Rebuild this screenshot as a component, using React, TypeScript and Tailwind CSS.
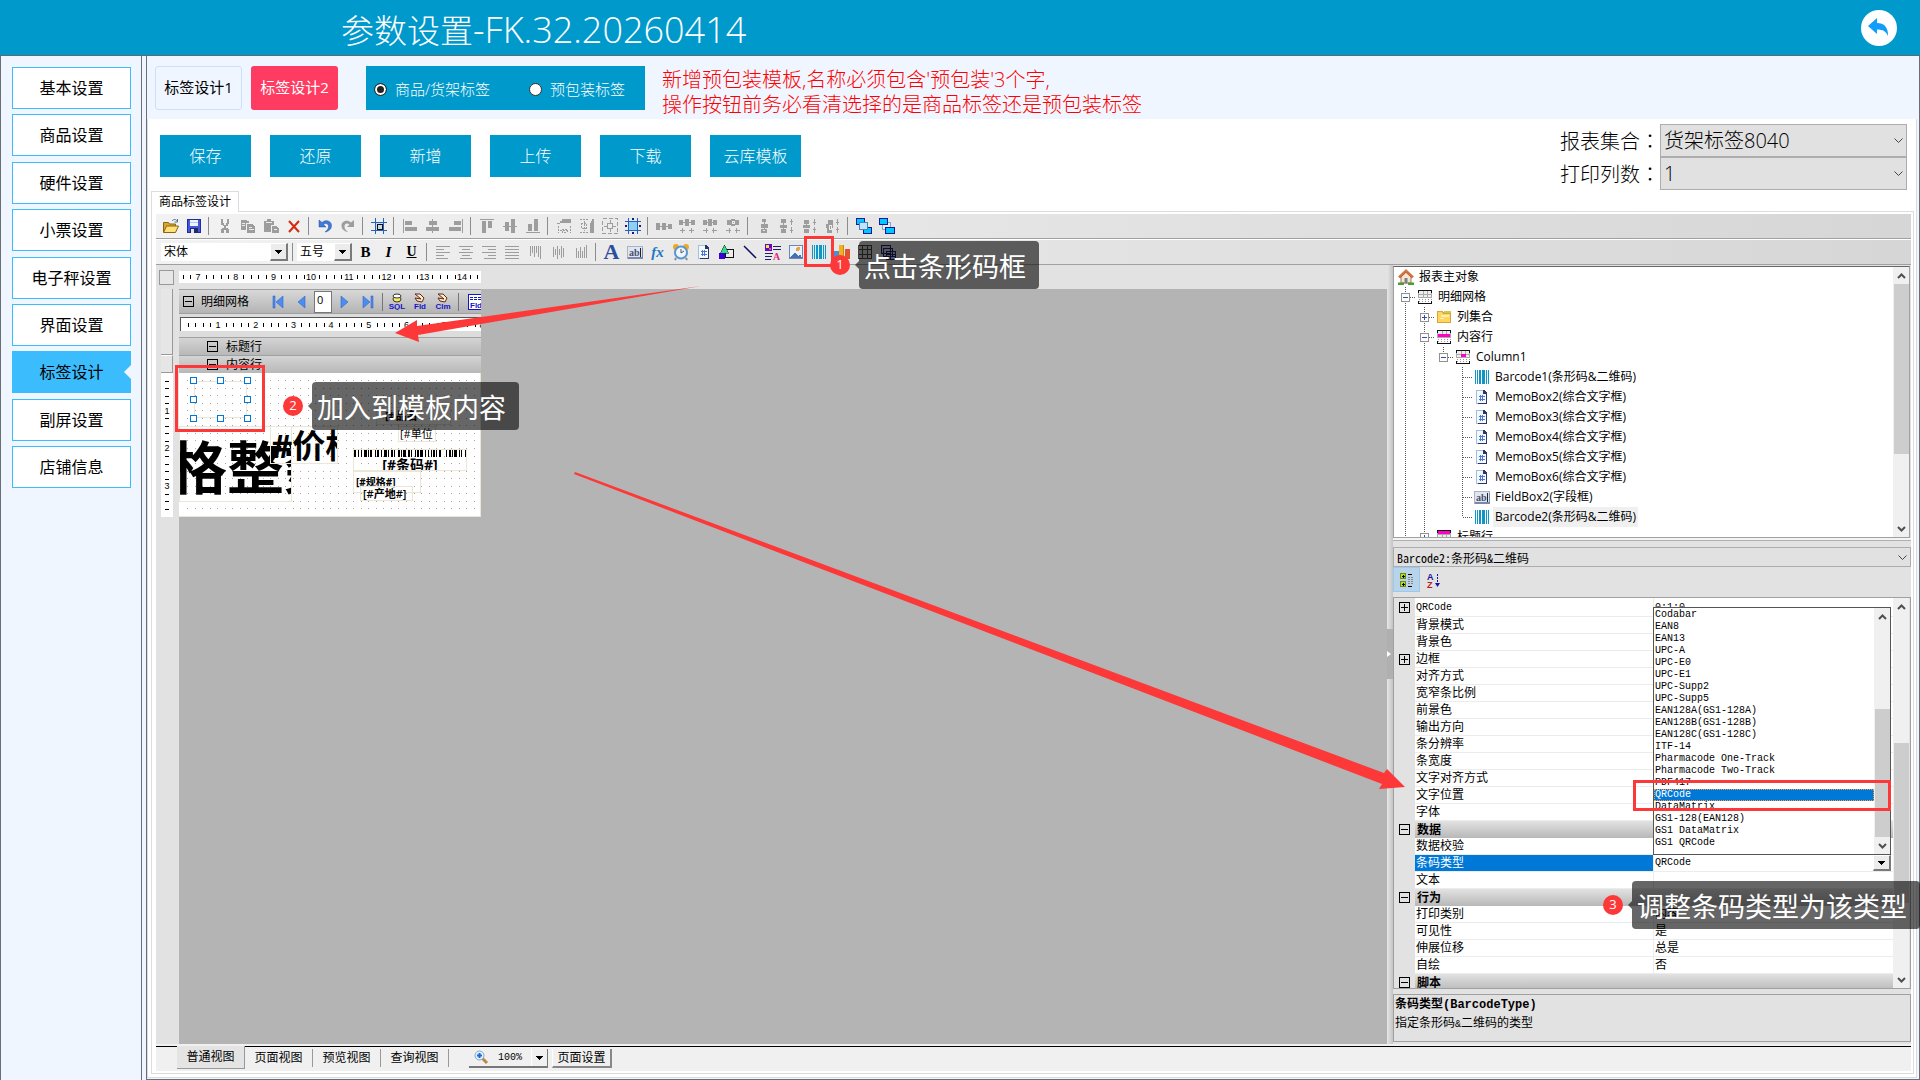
import type { ReactNode } from 'react';

const NAV = ['基本设置', '商品设置', '硬件设置', '小票设置', '电子秤设置', '界面设置', '标签设计', '副屏设置', '店铺信息'];
const ACTIONS = ['保存', '还原', '新增', '上传', '下载', '云库模板'];

const G = '#9d9d9d';

function Svg({ children, w = 16, h = 16 }: { children: ReactNode; w?: number; h?: number }) {
  return (
    <svg width={w} height={h} viewBox={`0 0 ${w} ${h}`} className="shrink-0" shapeRendering="crispEdges">
      {children}
    </svg>
  );
}

function P({ d, c = G }: { d: string; c?: string }) {
  return <path d={d} fill={c} />;
}

function L({ d, c = G, w = 1 }: { d: string; c?: string; w?: number }) {
  return <path d={d} fill="none" stroke={c} strokeWidth={w} />;
}

const BarcodeIcon = () => (
  <Svg><P c="#0d96c8" d="M1 1h1v14H1zM3 1h1v14H3zM5 1h2v14H5zM8 1h3v14H8zM12 1h1v14h-1zM14 1h1v14h-1z" /></Svg>
);

const MemoIcon = () => (
  <Svg>
    <path d="M2.500 1.500h7l3 3v10h-10z" fill="#f4f8ff" stroke="#9fc0e4" />
    <P c="#2f3566" d="M12 5h1v10H4v-1h8zM9 1h1l3 3v1H9z" />
    <L c="#4a78d0" d="M5 7.500h6M5 10.500h6M6.500 6v6M8.500 6v6" />
  </Svg>
);

const FieldIcon = () => (
  <Svg>
    <rect x="0.500" y="2.500" width="15" height="12" fill="#dfe6f2" stroke="#a9b3c8" />
    <P c="#7c88aa" d="M1 13h15v2H1zM15 4h1v11h-1z" />
    <text x="2" y="12" fontSize="10" fontWeight="bold" fill="#46506e" fontFamily="Liberation Serif, serif">ab</text>
    <P c="#222" d="M13 4h1v9h-1z" />
  </Svg>
);

function GridIcon({ mark }: { mark?: string }) {
  return (
    <Svg>
      <rect x="1.500" y="1.500" width="13" height="7" fill="#eee" stroke="#aaa" />
      <L c="#111" d="M1 1.500h14M1.500 1v3M14.500 1v3" />
      <L c="#aaa" d="M2 5.500h12M6 2v6M10.500 2v6" />
      {mark === 'row' && <P c="#ff00c8" d="M2 5h12v3H2z" />}
      {mark === 'cell' && <P c="#ff00c8" d="M6 5h5v3H6z" />}
      {mark === 'title' && <P c="#ff00c8" d="M2 2h12v3H2z" />}
      <path d="M2 10.500h13M2 12.500h13" stroke="#999" strokeDasharray="1 2" />
      <L c="#111" d="M1.500 12v2.500h13V12" />
    </Svg>
  );
}

const HouseIcon = () => (
  <svg width="16" height="16" viewBox="0 0 16 16">
    <path d="M3 8v6h10V8L8 3z" fill="#f3e7d2" stroke="#a5764a" />
    <path d="M8 0.500 0.500 7.500 2 9l6-5.500L14 9l1.500-1.500z" fill="#d9743a" stroke="#a84e1e" strokeWidth="0.500" />
    <path d="M6.500 9h3v5.500h-3z" fill="#7d7f8a" />
    <path d="M0 13.500h6V16H0zM10 13.500h6V16h-6z" fill="#4c9a3a" />
  </svg>
);

const TreeFolder = () => (
  <Svg>
    <path d="M1.500 2.500h5l1 2h7v9h-13z" fill="#ffd65c" stroke="#dba43a" />
    <P c="#fff0b8" d="M5 6h8v2H5zM4 9h4v1H4z" />
    <P c="#c8cc4a" d="M8 2h7v2H8z" />
  </Svg>
);

const OpenIcon = () => (
  <svg width="16" height="16" viewBox="0 0 16 16">
    <path d="M0.500 14V4.500h5l1 1.500h6v8z" fill="#d9a62e" stroke="#8a6410" />
    <path d="M0.500 14.500 3.500 8h12l-3 6.500z" fill="#ffe07a" stroke="#8a6410" />
    <path d="M9 3c1.500-2 4-2 5 0M14.500 1v3h-3" fill="none" stroke="#51709c" />
  </svg>
);

const SaveIcon = () => (
  <Svg>
    <path d="M1.500 1.500h13v13h-13z" fill="#4557d8" stroke="#1f2f9a" />
    <P c="#eef3ff" d="M4 2h8v6H4z" />
    <P c="#b9c6ef" d="M4 4h8v1H4z" />
    <P c="#23276b" d="M4 10h8v5H4z" />
    <P c="#dfe4f5" d="M5 11h3v4H5z" />
  </Svg>
);

const ROW1: (ReactNode | '|')[] = [
  <OpenIcon />,
  <SaveIcon />,
  '|',
  <Svg><P d="M4 1h2v4h1v2h2V5h1V1h2v5h-1v2H9v2h2v1h1v4H9v-3H7v3H4v-4h1v-1h2V8H6V7H4z" /></Svg>,
  <Svg><P d="M1 2h6v1h2v2H6v7H1zM7 6h5l3 3v6H7z" /><L c="#ececec" d="M9 9.500h3M9 11.500h5M2 5.500h3M2 7.500h3" /></Svg>,
  <Svg><P d="M1 3h3V1h4v2h3v4H8v7H1zM9 8h4l3 3v4H9z" /><L c="#ececec" d="M3 4.500h6M11 11.500h3" /></Svg>,
  <svg width="16" height="16" viewBox="0 0 16 16"><path d="M3 3l10 11M13 3 3 14" stroke="#d42a12" strokeWidth="2" /></svg>,
  '|',
  <svg width="16" height="16" viewBox="0 0 16 16"><path d="M2 2v7h7L6.500 6.500C9 4.500 12 6 11.500 9c-.3 2-1.500 3.500-3.500 5 4-.8 6.500-3 6.500-6.500C14.500 3 8.500 1 5 4.500z" fill="#3f7ad8" stroke="#24509c" strokeWidth="0.500" /></svg>,
  <svg width="16" height="16" viewBox="0 0 16 16"><path d="M14 2v7H7l2.500-2.500C7 4.500 4 6 4.500 9c.3 2 1.500 3.500 3.500 5-4-.8-6.500-3-6.500-6.500C1.500 3 7.500 1 11 4.500z" fill={G} /></svg>,
  '|',
  <Svg><P c="#c9daf0" d="M5 5h7v7H5z" /><L c="#2563b8" d="M0 4.500h16M0 12.500h16M4.500 0v16M12.500 0v16" /><L c="#111" d="M6 6.500h5v5h-5z" /></Svg>,
  '|',
  <Svg><P d="M1 1h1v14H1zM3 3h7v4H3zM3 9h12v4H3z" /></Svg>,
  <Svg><P d="M7 1h1v14H7zM4 3h8v4H4zM1 9h13v4H1z" /></Svg>,
  <Svg><P d="M14 1h1v14h-1zM6 3h7v4H6zM1 9h12v4H1z" /></Svg>,
  '|',
  <Svg><P d="M1 1h14v1H1zM3 3h4v12H3zM9 3h4v7H9z" /></Svg>,
  <Svg><P d="M1 8h14v1H1zM3 4h4v9H3zM9 1h4v14H9z" /></Svg>,
  <Svg><P d="M1 14h14v1H1zM3 6h4v7H3zM9 1h4v12H9z" /></Svg>,
  '|',
  <Svg><P d="M6 1h9v4H4V3h2zM1 5h3v1H1z" /><path d="M2 8v7M14 8v7M6 11h5v3H6zM4 12.500h8" stroke={G} fill="none" strokeDasharray="2 1" /></Svg>,
  <Svg><P d="M11 5h1V3h1V1h2v14h-4z" /><path d="M1 1.500h8M1 14.500h8M5 3v10M2 5h5v5H2z" stroke={G} fill="none" strokeDasharray="2 1" /></Svg>,
  <Svg><path d="M.5.5h15v15H.5z" stroke={G} fill="none" strokeDasharray="4 2" /><L d="M5.500 5.500h5v5h-5zM8 2v3M8 11v3M2 8h3M11 8h3" /></Svg>,
  <Svg><P c="#8fd0f5" d="M4 4h8v8H4z" /><L c="#2563b8" d="M0 3.500h16M0 12.500h16M3.500 0v16M12.500 0v16" /><P c="#101a80" d="M7 0h2v2H7zM7 14h2v2H7zM0 7h2v2H0zM14 7h2v2h-2z" /></Svg>,
  '|',
  <Svg><P d="M0 5h4v7H0zM4 8h2v1H4zM6 5h4v7H6zM10 8h2v1h-2zM12 6h4v5h-4z" /></Svg>,
  <Svg><P d="M0 2h4v5H0zM4 4h2v1H4zM6 1h4v7H6zM10 4h2v1h-2zM12 2h4v5h-4zM1 12h5v1H1zM3 10h1v5H3zM10 12h5v1h-5zM12 10h1v5h-1z" /></Svg>,
  <Svg><P d="M1 2h4v5H1zM5 4h1v1H5zM6 1h4v7H6zM10 4h1v1h-1zM11 2h4v5h-4zM1 12h5v1H1zM4 10h1v5H4zM10 12h5v1h-5zM11 10h1v5h-1z" /></Svg>,
  <Svg><P d="M2 2h4v5H2zM6 1h4v7H6zM10 2h4v5h-4zM1 12h5v1H1zM4 10h1v5H4zM10 12h5v1h-5zM11 10h1v5h-1z" /><L c="#ececec" d="M7 3.500h2v2h-2z" /></Svg>,
  '|',
  <Svg><P d="M6 1h4v3H6zM8 4h1v2H8zM5 6h7v4H5zM8 10h1v1H8zM5 11h6v4H5z" /><L c="#ececec" d="M7 12.500h2" /></Svg>,
  <Svg><P d="M2 1h5v4H2zM4 5h1v2H4zM1 7h7v3H1zM4 10h1v1H4zM2 11h5v4H2zM12 1h1v6h-1zM11 3h3v1h-3zM12 9h1v6h-1zM11 12h3v1h-3z" /></Svg>,
  <Svg><P d="M2 2h5v4H2zM4 6h1v1H4zM1 7h7v3H1zM2 11h5v4H2zM12 1h1v6h-1zM11 4h3v1h-3zM12 9h1v6h-1zM11 11h3v1h-3z" /></Svg>,
  <Svg><P d="M3 2h5v4H3zM1 6h7v4H1zM2 10h5v5H2zM12 1h1v6h-1zM11 4h3v1h-3zM12 9h1v6h-1zM11 11h3v1h-3z" /><L c="#ececec" d="M4 7.500h2v4h-2z" /></Svg>,
  '|',
  <Svg><path d="M.5.5h8v6h-8zM7.500 9.500h8v6h-8z" fill="#00c8ff" stroke="#1a1a90" /><path d="M3.500 4.500h8v7h-8z" fill="#bfe4fb" stroke="#3f86d0" /></Svg>,
  <Svg><path d="M3.500 4.500h8v7h-8z" fill="#e4f1fb" stroke="#7aa8d8" /><path d="M.5.5h8v6h-8zM6.500 9.500h9v6h-9z" fill="#00c8ff" stroke="#1a1a90" /></Svg>,
];

const ROW2: (ReactNode | '|')[] = [
  <b className="font-['Liberation_Serif',serif] text-[15px] leading-4">B</b>,
  <b className="font-['Liberation_Serif',serif] text-[15px] leading-4 italic">I</b>,
  <b className="font-['Liberation_Serif',serif] text-[14px] leading-4 underline">U</b>,
  '|',
  <Svg><L d="M1 2.500h14M1 5.500h8M1 8.500h14M1 11.500h8M1 14.500h12" /></Svg>,
  <Svg><L d="M1 2.500h14M4 5.500h8M1 8.500h14M4 11.500h8M2 14.500h12" /></Svg>,
  <Svg><L d="M1 2.500h14M7 5.500h8M1 8.500h14M7 11.500h8M3 14.500h12" /></Svg>,
  <Svg><L d="M1 2.500h14M1 5.500h14M1 8.500h14M1 11.500h14M1 14.500h14" /></Svg>,
  <Svg><L d="M3.500 2v10M5.500 2v7M7.500 2v11M9.500 2v7M11.500 2v11M13.500 2v13" /></Svg>,
  <Svg><L d="M3.500 3v10M5.500 5v6M7.500 2v13M9.500 5v6M11.500 2v12M13.500 4v9" /></Svg>,
  <Svg><L d="M3.500 4v10M5.500 7v7M7.500 3v11M9.500 7v7M11.500 3v11M13.500 1v13" /></Svg>,
  '|',
  <b className="font-['Liberation_Serif',serif] text-[22px] leading-4 text-[#2a4f9c]">A</b>,
  <FieldIcon />,
  <i className="font-['Liberation_Serif',serif] text-[15px] font-bold leading-4 text-[#2277c8]">fx</i>,
  <svg width="18" height="18" viewBox="0 0 18 18">
    <circle cx="4" cy="4" r="3" fill="#f0a91e" /><circle cx="14" cy="4" r="3" fill="#f0a91e" />
    <path d="M4 15l-1 2M14 15l1 2" stroke="#8a8a8a" strokeWidth="2" />
    <circle cx="9" cy="9.500" r="6" fill="#eef7ff" stroke="#5b95cf" strokeWidth="2" />
    <path d="M9 6v4l3-2" fill="none" stroke="#555" />
  </svg>,
  <MemoIcon />,
  <Svg><path d="M6.500 5.500h8v8h-8z" fill="#ededed" stroke="#111" /><path d="M6 1v8H2v-1z" fill="#28e08c" /><path d="M5.500 1 9.500 9h-8z" fill="#28e08c" stroke="#111" strokeWidth="0.500" /><P c="#3a00d8" d="M0 9h6v6H0z" /></Svg>,
  <svg width="16" height="16" viewBox="0 0 16 16"><path d="M2 2l12 12" stroke="#101060" strokeWidth="1.500" /></svg>,
  <Svg><P c="#5a0fb8" d="M0 0h7v7H0z" /><P c="#ffe14a" d="M1 1h3v3H1z" /><P c="#ff40a0" d="M4 4h2v2H4z" /><L c="#20206a" d="M8 2.500h8M8 5.500h8M0 9.500h8M0 12.500h7M0 15.500h6" /><text x="8" y="16" fontSize="10" fontWeight="bold" fill="#e0287c" fontFamily="Liberation Serif, serif">A</text></Svg>,
  <Svg><rect x="1.500" y="1.500" width="13" height="13" fill="#e8f3ff" stroke="#6f86b5" /><circle cx="10" cy="5" r="2" fill="#f2a23a" /><path d="M2 14l5-6 3 4 2-2 2 4z" fill="#4a6fb0" /></Svg>,
  <BarcodeIcon />,
  <Svg><P c="#4a8fd0" d="M0 7h5v8H0z" /><P c="#f0b020" d="M5 1h5v14H5z" /><P c="#c98a10" d="M9 1h1v14H9z" /><P c="#e0512c" d="M11 5h5v10h-5z" /></Svg>,
  <Svg><rect x="1.500" y="1.500" width="13" height="13" fill="#ddd" stroke="#444" /><L c="#444" d="M1 5.500h14M1 10.500h14M5.500 1v14M10.500 1v14" /></Svg>,
  <Svg><path d="M1.500 1.500h9v8h-9zM3.500 4.500h9v8h-9zM6.500 7.500h9v8h-9z" fill="#cfd8ee" stroke="#22226a" /><L c="#22226a" d="M7 10.500h8M7 12.500h8M10 8v7" /></Svg>,
];

function ToolItems({ items }: { items: (ReactNode | '|')[] }) {
  return (
    <>
      {items.map((it, i) =>
        it === '|' ? (
          <span key={i} className="ml-[3px] mr-[4px] h-[18px] w-px shrink-0 bg-[#8c8c8c]" />
        ) : (
          <button key={i} type="button" className="flex h-[22px] w-[23px] shrink-0 items-center justify-center">
            {it}
          </button>
        ),
      )}
    </>
  );
}

function DropButton() {
  return (
    <span className="pointer-events-none absolute right-0 top-0 flex h-full w-[18px] items-center justify-center border-b-2 border-r-2 border-t border-l border-b-[#7a7a7a] border-r-[#7a7a7a] border-l-white border-t-white bg-[#ececec]">
      <Svg w={7} h={4}><P c="#000" d="M0 0h7v1H0zM1 1h5v1H1zM2 2h3v1H2zM3 3h1v1H3z" /></Svg>
    </span>
  );
}

function Chevron({ up = false }: { up?: boolean }) {
  return (
    <svg width="9" height="6" viewBox="0 0 9 6">
      <path d={up ? 'M1 5l3.500-3.500L8 5' : 'M1 1l3.500 3.500L8 1'} fill="none" stroke="#505050" strokeWidth="2" />
    </svg>
  );
}

function ScrollBar({ before, thumb }: { before: string; thumb: string }) {
  return (
    <div className="flex w-[16px] shrink-0 flex-col items-center bg-[#f0f0f0]">
      <div className="flex h-[17px] items-center"><Chevron up /></div>
      <div className={before} />
      <div className={`w-[15px] bg-[#cdcdcd] ${thumb}`} />
      <div className="flex-1" />
      <div className="flex h-[17px] items-center"><Chevron /></div>
    </div>
  );
}

function BigSelect({ id, label, value }: { id: string; label: string; value: string }) {
  return (
    <div className="flex h-[33px] items-center">
      <label htmlFor={id} className="w-[100px] font-['Noto_Sans_CJK_TC',sans-serif] text-[20px]">
        <span className="font-['Noto_Sans_CJK_SC',sans-serif]">{label}</span>：
      </label>
      <div className="relative">
        <select id={id} className="h-[33px] w-[247px] appearance-none border border-[#adadad] bg-[#e1e1e1] px-[3px] text-[20px] font-light leading-[28px]">
          <option>{value}</option>
        </select>
        <svg className="pointer-events-none absolute right-[4px] top-[14px]" width="9" height="6" viewBox="0 0 9 6">
          <path d="M.5.5l4 4 4-4" fill="none" stroke="#444" />
        </svg>
      </div>
    </div>
  );
}

/* Latin runs are half the width of the Chinese glyphs */
function Song({ text, bold = false }: { text: string; bold?: boolean }) {
  return (
    <>
      {text.split(/([ -~]+)/).map((part, i) =>
        /^[ -~]+$/.test(part) ? (
          <span key={i} className={bold ? "font-['Liberation_Mono',monospace] text-[12px]" : "font-['Liberation_Mono',monospace] text-[10px]"}>{part}</span>
        ) : (
          part
        ),
      )}
    </>
  );
}

function Ruler({ w, h = 12, first, at, count }: { w: number; h?: number; first: number; at: number; count: number }) {
  const ticks: number[] = [];
  for (let k = -5; k < count * 5; k++) if (k % 5 !== 0) ticks.push(Math.round(at + k * 7.55));
  return (
    <svg width={w} height={h} className="block bg-white" shapeRendering="crispEdges">
      {ticks.filter((x) => x > 1 && x < w).map((x) => <rect key={x} x={x} y={h / 2 - 2} width="1" height="4" fill="#000" />)}
      {Array.from({ length: count }, (_, i) => (
        <text key={i} x={at + i * 37.7} y={h / 2 + 3} textAnchor="middle" fontSize="9" fontFamily="Liberation Sans, sans-serif">{first + i}</text>
      ))}
    </svg>
  );
}

function VRuler() {
  return (
    <svg width="12" height="144" className="block bg-white" shapeRendering="crispEdges">
      {Array.from({ length: 18 }, (_, i) => i + 1).filter((k) => k % 5 !== 0).map((k) => (
        <rect key={k} x="4" y={Math.round(k * 7.55)} width="4" height="1" />
      ))}
      {[1, 2, 3].map((n) => (
        <text key={n} x="6" y={n * 37.7 + 3} textAnchor="middle" fontSize="9" fontFamily="Liberation Sans, sans-serif">{n}</text>
      ))}
    </svg>
  );
}

function Fold({ plus = false }: { plus?: boolean }) {
  return (
    <Svg w={11} h={11}>
      <path d="M.5.5h10v10H.5z" fill="none" stroke="#000" />
      <L c="#000" d={plus ? 'M2 5.500h7M5.500 2v7' : 'M2 5.500h7'} />
    </Svg>
  );
}

const BARS = [2, 1, 1, 2, 1, 1, 3, 1, 1, 1, 2, 2, 1, 1, 2, 1, 1, 2, 3, 1, 1, 1, 2, 1, 1, 2, 2, 1, 1, 1, 3, 1, 2, 1, 1, 2, 1, 1, 2, 1, 3, 1, 1, 2, 1, 1, 1, 1, 2, 1, 1, 1, 2, 5, 1, 1, 2, 1, 1, 1, 3, 1, 1, 1, 1, 2, 1, 2];

function DesignBarcode() {
  let x = 0;
  const rects = BARS.map((b, i) => {
    const start = x;
    x += b + (i % 5 === 0 ? 1 : 0);
    return i % 2 === 0 ? <rect key={i} x={start} y="0" width={b} height="7" /> : null;
  });
  return <svg width="114" height="7" className="block" shapeRendering="crispEdges">{rects}</svg>;
}

const HANDLES = [[11, 4], [38, 4], [65, 4], [11, 23], [65, 23], [11, 42], [38, 42], [65, 42]];

function LabelCanvas() {
  const box = 'absolute overflow-hidden whitespace-nowrap border border-[#ebe6d6]';
  return (
    <div className="relative h-[144px] w-[302px] overflow-hidden border-b border-r border-[#ebe6d6] bg-white">
      <svg className="absolute inset-0" width="302" height="144" shapeRendering="crispEdges">
        {Array.from({ length: 18 }, (_, r) =>
          Array.from({ length: 39 }, (_, c) => (
            <rect key={`${r}-${c}`} x={Math.round(8 + c * 7.55)} y={Math.round(7 + r * 7.55)} width="1" height="1" fill="#a9a0a0" />
          )),
        )}
      </svg>
      <div className={`${box} left-[15px] top-[8px] h-[37px] w-[53px]`} />
      <div className={`${box} left-0 top-[53px] h-[76px] w-[113px]`}>
        <div className="-ml-[10px] text-[57px] font-bold leading-[80px]">格整数</div>
      </div>
      <div className={`${box} left-[91px] top-[53px] h-[38px] w-[68px]`}>
        <div className="text-[33px] font-bold leading-[38px]">#价格</div>
      </div>
      <div className={`${box} left-[197px] top-[34px] h-[18px] w-[75px] pl-2 text-[11px] font-bold leading-4`}>[#品名</div>
      <div className={`${box} left-[219px] top-[53px] h-[16px] w-[38px] pl-px text-[11px] leading-[14px]`}>[#单位</div>
      <div className={`${box} left-[174px] top-[76px] h-[22px] w-[114px] text-center`}>
        <DesignBarcode />
        <div className="text-[14px] font-bold leading-[15px]">[#条码#]</div>
      </div>
      <div className={`${box} left-[174px] top-[98px] h-[22px] w-[68px] pl-[2px] text-[10px] font-bold leading-[20px]`}>[#规格#]</div>
      <div className={`${box} left-[181px] top-[113px] h-[15px] w-[53px] pl-[2px] text-[11px] font-semibold leading-[14px]`}>[#产地#]</div>
      <svg className="absolute inset-0" width="302" height="144" shapeRendering="crispEdges">
        {HANDLES.map(([x, y]) => (
          <rect key={`${x}-${y}`} x={x + 0.5} y={y + 0.5} width="6" height="6" fill="#fff" stroke="#0078d7" />
        ))}
      </svg>
    </div>
  );
}

function BandNav() {
  const arrow = (d: string) => (
    <button type="button" className="flex w-[24px] justify-center">
      <svg width="12" height="14" viewBox="0 0 12 14"><path d={d} fill="#4d8df0" stroke="#2456c0" strokeWidth="0.500" /></svg>
    </button>
  );
  const db = (word: string, top: ReactNode) => (
    <button type="button" className="flex w-[23px] shrink-0 justify-center">
      <svg width="18" height="17" viewBox="0 0 18 17">
        {top}
        <text x="9" y="16" textAnchor="middle" fontSize="8" fontWeight="bold" fill="#1414c8" fontFamily="Liberation Sans, sans-serif">{word}</text>
      </svg>
    </button>
  );
  const dish = <path d="M4 1h5l4 4-2 4-5-1-2-3 6 1z" fill="#f5f3c0" stroke="#6a1f1f" />;
  return (
    <>
      <div className="ml-[17px] flex shrink-0 items-center">
        {arrow('M1 1h2v12H1zM11 1v12L4 7z')}
        {arrow('M9 1v12L2 7z')}
        <input aria-label="记录" defaultValue="0" className="h-[22px] w-[18px] border border-[#777] bg-white pb-1 pl-[2px] text-[11px]" />
        {arrow('M3 1v12l7-6z')}
        {arrow('M9 1h2v12H9zM1 1v12l7-6z')}
      </div>
      <span className="mx-[2px] h-[18px] w-px shrink-0 bg-[#777]" />
      {db('SQL', <><ellipse cx="9" cy="6" rx="4" ry="3" fill="#f6ee5a" stroke="#333" /><ellipse cx="9" cy="3" rx="4" ry="2" fill="#fff" stroke="#333" /></>)}
      {db('Fld', dish)}
      {db('Clm', dish)}
      <span className="mx-[4px] h-[18px] w-px shrink-0 bg-[#777]" />
      <svg width="16" height="16" viewBox="0 0 16 16" shapeRendering="crispEdges" className="ml-[5px] shrink-0">
        <path d="M.5.5h15v15H.5z" fill="#fff" stroke="#1414c8" />
        <path d="M2 3.500h12M2 5.500h12" stroke="#1414c8" strokeDasharray="3 1" />
        <text x="2" y="14" fontSize="8" fontWeight="bold" fill="#1414c8" fontFamily="Liberation Sans, sans-serif">Fld</text>
      </svg>
    </>
  );
}

type Node = { depth: number; text: string; icon: ReactNode; open?: boolean; guides?: string; last?: boolean; selected?: boolean };

const TREE: Node[] = [
  { depth: 1, text: '明细网格', icon: <GridIcon />, open: true, guides: '' },
  { depth: 2, text: '列集合', icon: <TreeFolder />, open: false, guides: '|' },
  { depth: 2, text: '内容行', icon: <GridIcon mark="row" />, open: true, guides: '|' },
  { depth: 3, text: 'Column1', icon: <GridIcon mark="cell" />, open: true, guides: '||', last: true },
  { depth: 4, text: 'Barcode1(条形码&二维码)', icon: <BarcodeIcon />, guides: '|| ' },
  { depth: 4, text: 'MemoBox2(综合文字框)', icon: <MemoIcon />, guides: '|| ' },
  { depth: 4, text: 'MemoBox3(综合文字框)', icon: <MemoIcon />, guides: '|| ' },
  { depth: 4, text: 'MemoBox4(综合文字框)', icon: <MemoIcon />, guides: '|| ' },
  { depth: 4, text: 'MemoBox5(综合文字框)', icon: <MemoIcon />, guides: '|| ' },
  { depth: 4, text: 'MemoBox6(综合文字框)', icon: <MemoIcon />, guides: '|| ' },
  { depth: 4, text: 'FieldBox2(字段框)', icon: <FieldIcon />, guides: '|| ' },
  { depth: 4, text: 'Barcode2(条形码&二维码)', icon: <BarcodeIcon />, guides: '|| ', last: true, selected: true },
  { depth: 2, text: '标题行', icon: <GridIcon mark="title" />, open: false, guides: '|' },
];

function TreeRow({ node }: { node: Node }) {
  const dots = { stroke: '#555', strokeDasharray: '1 1' };
  return (
    <li className="flex h-[20px] items-center pl-[2px]">
      {(node.guides ?? '').split('').map((g, i) => (
        <Svg key={i} w={19} h={20}>{g === '|' && <path d="M9.500 0v20" {...dots} />}</Svg>
      ))}
      <Svg w={19} h={20}>
        <path d={node.last ? 'M9.500 0v10' : 'M9.500 0v20'} {...dots} />
        <path d="M10 10.500h9" {...dots} />
        {node.open !== undefined && (
          <>
            <rect x="5.500" y="6.500" width="8" height="8" fill="#fdfdfd" stroke="#919191" />
            <L c="#3550a0" d={node.open ? 'M7 10.500h5' : 'M7 10.500h5M9.500 8v5'} />
          </>
        )}
      </Svg>
      <span className="flex w-[19px] justify-center">{node.icon}</span>
      <span className={node.selected ? 'ml-[2px] bg-[#f0f0f0] px-[2px] leading-[20px]' : 'ml-[4px] leading-[20px]'}>{node.text}</span>
    </li>
  );
}

type Prop = { name: string; value?: string; cat?: boolean; plus?: boolean; active?: boolean };

const PROPS: Prop[] = [
  { name: 'QRCode', value: '0;1;0', plus: true },
  { name: '背景模式' },
  { name: '背景色' },
  { name: '边框', plus: true },
  { name: '对齐方式' },
  { name: '宽窄条比例' },
  { name: '前景色' },
  { name: '输出方向' },
  { name: '条分辨率' },
  { name: '条宽度' },
  { name: '文字对齐方式' },
  { name: '文字位置' },
  { name: '字体' },
  { name: '数据', cat: true },
  { name: '数据校验' },
  { name: '条码类型', value: 'QRCode', active: true },
  { name: '文本' },
  { name: '行为', cat: true },
  { name: '打印类别', value: '内容' },
  { name: '可见性', value: '是' },
  { name: '伸展位移', value: '总是' },
  { name: '自绘', value: '否' },
  { name: '脚本', cat: true },
];

const CODES = ['Codabar', 'EAN8', 'EAN13', 'UPC-A', 'UPC-E0', 'UPC-E1', 'UPC-Supp2', 'UPC-Supp5', 'EAN128A(GS1-128A)', 'EAN128B(GS1-128B)', 'EAN128C(GS1-128C)', 'ITF-14', 'Pharmacode One-Track', 'Pharmacode Two-Track', 'PDF417', 'QRCode', 'DataMatrix', 'GS1-128(EAN128)', 'GS1 DataMatrix', 'GS1 QRCode'];

function PropertyGrid() {
  return (
    <div className="relative flex h-[392px] overflow-hidden border border-[#a0a0a0] bg-[#e2e2e2] pr-px">
      <table className="h-[391px] flex-1 table-fixed border-separate border-spacing-0 text-[12px]">
        <colgroup><col className="w-[21px]" /><col className="w-[239px]" /><col /></colgroup>
        <tbody>
          {PROPS.map((p) =>
            p.cat ? (
              <tr key={p.name} className="h-[17px]">
                <td className="p-0"><div className="ml-[5px]"><Fold /></div></td>
                <th colSpan={2} className="bg-linear-to-b from-[#e2e2e2] to-[#b8b8b8] p-0 pl-[2px] text-left leading-4">{p.name}</th>
              </tr>
            ) : (
              <tr key={p.name} className="h-[17px]">
                <td className="p-0">{p.plus && <div className="ml-[5px] leading-none"><Fold plus /></div>}</td>
                <td className={p.active ? 'border-b border-r border-[#ececec] bg-[#0078d7] p-0 pl-px leading-4 text-white' : 'border-b border-r border-[#ececec] bg-white p-0 pl-px leading-4'}>
                  <Song text={p.name} />
                </td>
                <td className="border-b border-[#ececec] bg-white p-0 pl-px leading-4">
                  {p.active ? (
                    <div className="relative mr-[2px] h-4">
                      <select aria-label={p.name} className="block h-4 w-full appearance-none font-['Liberation_Mono',monospace] text-[10px]">
                        <option>{p.value}</option>
                      </select>
                      <DropButton />
                    </div>
                  ) : (
                    <Song text={p.value ?? ''} />
                  )}
                </td>
              </tr>
            ),
          )}
        </tbody>
      </table>
      <ScrollBar before="h-[128px]" thumb="h-[160px]" />
      <div className="absolute left-[259px] top-[9px] flex h-[248px] w-[238px] border border-[#555] bg-white">
        <ul role="listbox" className="flex-1 pt-px font-['Liberation_Mono',monospace] text-[10px] leading-[12px]">
          {CODES.map((c) => (
            <li key={c} role="option" aria-selected={c === 'QRCode'} className={c === 'QRCode' ? 'h-[12px] bg-[#0078d7] pl-px text-white outline-1 -outline-offset-1 outline-dotted outline-[#ff9a3c]' : 'h-[12px] pl-px'}>
              {c}
            </li>
          ))}
        </ul>
        <ScrollBar before="h-[84px]" thumb="h-[128px]" />
      </div>
    </div>
  );
}

function Callout({ n, text, badge, tip }: { n: number; text: string; badge: string; tip: string }) {
  return (
    <>
      <div className={`absolute flex h-[20px] w-[20px] items-center justify-center rounded-full bg-[#fc3838] text-[13px] text-white ${badge}`}>{n}</div>
      <div className={`absolute flex h-[48px] items-center whitespace-nowrap rounded-[4px] bg-black/60 pl-[5px] pt-[4px] text-[27px] text-white ${tip}`}>
        <span className="absolute -left-[4px] top-[20px] h-0 w-0 border-y-4 border-r-4 border-y-transparent border-r-black/60" />
        {text}
      </div>
    </>
  );
}

const barClass = 'h-[25px] border-b border-[#a0a0a0] bg-linear-to-r from-[#f2f2f2] to-[#d6d6d6] flex items-center';

export default function App() {
  return (
    <div className="relative flex min-h-screen flex-col overflow-hidden bg-[#eff6ff] font-['Open_Sans','Noto_Sans_CJK_SC',sans-serif] text-black">
      <header className="flex h-[56px] items-center justify-between border-b border-[#5f6b73] bg-[#0099cc] pl-[341px] pr-[23px]">
        <h1 className="pt-[6px] text-[33px] font-light leading-[44px] text-white">
          参数设置<span className="text-[36px]">-FK.32.20260414</span>
        </h1>
        <button type="button" aria-label="返回">
          <svg width="36" height="36" viewBox="0 0 36 36">
            <circle cx="18" cy="18" r="18" fill="#fff" />
            <path d="M7 16l9-8v5c7 0 11.500 4.500 11 13-2-4.500-5-6.500-11-6.500V24z" fill="#129dfb" />
          </svg>
        </button>
      </header>

      <div className="flex flex-1">
        <nav className="flex w-[142px] shrink-0 flex-col border-x border-[#6a6f75] px-[11px] pt-[11px]">
          <div className="flex h-[421px] flex-col justify-between">
            {NAV.map((n) => (
              <button
                key={n}
                type="button"
                className={
                  n === '标签设计'
                    ? 'relative h-[42px] w-[119px] bg-[#3bbcfd] text-[16px]'
                    : 'h-[42px] w-[119px] border border-[#3bbcfd] bg-white text-[16px]'
                }
              >
                {n}
                {n === '标签设计' && <span className="absolute right-0 top-[14px] border-y-[7px] border-r-[7px] border-y-transparent border-r-[#eff6ff]" />}
              </button>
            ))}
          </div>
        </nav>

        <main className="ml-[4px] flex min-w-0 flex-1 flex-col border-x border-b border-[#6a6f75] pb-px">
          <div className="flex h-[63px] items-center pl-[8px]">
            <button type="button" className="h-[44px] w-[87px] rounded-[3px] border border-[#cddffb] text-[15px]">标签设计1</button>
            <button type="button" className="ml-[9px] h-[44px] w-[87px] rounded-[3px] bg-[#ff3b62] text-[15px] text-white">标签设计2</button>
            <div className="ml-[28px] flex h-[44px] w-[279px] items-center bg-[#0099cc] pl-[8px] pt-[4px] text-[15px] font-light text-white">
              <label className="flex w-[155px] items-center gap-[8px]">
                <input type="radio" name="kind" defaultChecked className="h-[13px] w-[13px] appearance-none rounded-full border border-[#333] bg-white checked:bg-[#222] checked:shadow-[inset_0_0_0_2px_white]" />
                商品/货架标签
              </label>
              <label className="flex items-center gap-[8px]">
                <input type="radio" name="kind" className="h-[13px] w-[13px] appearance-none rounded-full border border-[#333] bg-white" />
                预包装标签
              </label>
            </div>
            <p className="ml-[17px] pt-[8px] text-[20px] font-light leading-[25px] text-[#ff0000]">
              新增预包装模板,名称必须包含'预包装'3个字,
              <br />
              操作按钮前务必看清选择的是商品标签还是预包装标签
            </p>
          </div>

          <div className="mr-[2px] flex flex-1 flex-col border-b border-l border-r border-[#dcdcdc] bg-white pb-[3px] pl-[3px] pr-[2px]">
            <div className="flex h-[72px] justify-between">
              <div className="flex gap-[19px] pl-[9px] pt-[16px]">
                {ACTIONS.map((a) => (
                  <button key={a} type="button" className="h-[42px] w-[91px] bg-[#0099cc] text-[16px] font-light text-white">{a}</button>
                ))}
              </div>
              <div className="pr-[7px] pt-[5px] font-light">
                <BigSelect id="report" label="报表集合" value="货架标签8040" />
                <BigSelect id="columns" label="打印列数" value="1" />
              </div>
            </div>

            <div className="flex h-[20px] items-end">
              <button type="button" className="h-[21px] w-[88px] translate-y-px border border-b-0 border-[#dcdcdc] bg-white text-[12px] leading-[18px]">商品标签设计</button>
            </div>

            <section className="flex flex-1 flex-col border border-[#dcdcdc] bg-white pb-[2px] pl-[4px] pr-[2px] pt-[2px]">
              <div className={`${barClass} pl-[3px]`}><ToolItems items={ROW1} /></div>
              <div className={`${barClass} mt-px pl-[5px]`}>
                <div className="relative h-[18px] w-[127px]">
                  <select aria-label="字体" className="block h-[18px] w-full appearance-none bg-white pl-[3px] text-[12px] leading-[16px]"><option>宋体</option></select>
                  <DropButton />
                </div>
                <span className="mx-[4px] h-[18px] w-px bg-[#8c8c8c]" />
                <div className="relative mr-[2px] h-[18px] w-[55px]">
                  <select aria-label="字号" className="block h-[18px] w-full appearance-none bg-white pl-[3px] text-[12px] leading-[16px]"><option>五号</option></select>
                  <DropButton />
                </div>
                <ToolItems items={ROW2} />
              </div>

              <div className="flex flex-1 bg-[#e2e2e2]">
                <div className="flex min-w-0 flex-1 flex-col">
                  <div className="flex h-[24px] items-center pl-[3px]">
                    <span className="mr-[5px] h-[15px] w-[15px] border border-[#999] bg-[#e6e6e6]" />
                    <Ruler w={302} first={7} at={19} count={8} />
                  </div>
                  <div className="flex flex-1">
                    <div className="w-[23px] shrink-0 pl-[5px]">
                      <div className="h-[66px] w-[12px] border-b border-r border-[#999] bg-[#e6e6e6]" />
                      <div className="h-[18px] w-[12px] border-b border-r border-t border-b-[#999] border-r-[#999] border-t-white bg-[#e6e6e6]" />
                      <VRuler />
                    </div>
                    <div className="flex-1 bg-[#b4b4b4]">
                      <div className="w-[302px] overflow-hidden text-[12px]">
                        <div className="flex h-[25px] items-center border-y border-[#a0a0a0] bg-linear-to-b from-[#d8d8d8] to-[#b4b4b4] pl-[4px]">
                          <Fold />
                          <span className="ml-[7px] shrink-0 whitespace-nowrap">明细网格</span>
                          <BandNav />
                        </div>
                        <div className="h-[23px] bg-[#dcdcdc] pt-[3px]">
                          <div className="ml-px border-l border-t border-[#555] bg-white"><Ruler w={300} h={13} first={1} at={37} count={8} /></div>
                        </div>
                        <div className="flex h-[19px] items-center border-y border-[#a0a0a0] bg-linear-to-b from-[#d4d4d4] to-[#b8b8b8] pl-[28px]">
                          <Fold />
                          <span className="ml-[8px] leading-4">标题行</span>
                        </div>
                        <div className="flex h-[17px] items-center bg-linear-to-b from-[#d4d4d4] to-[#b8b8b8] pl-[28px]">
                          <Fold />
                          <span className="ml-[8px] leading-4">内容行</span>
                        </div>
                        <LabelCanvas />
                      </div>
                    </div>
                  </div>
                </div>

                <div className="flex w-[6px] shrink-0 flex-col bg-linear-to-r from-[#e6e6e6] to-[#c4c4c4] pt-[364px]">
                  <div className="flex h-[50px] items-center bg-[#b0b0b0]">
                    <span className="border-y-[3px] border-l-[4px] border-y-transparent border-l-white" />
                  </div>
                </div>

                <aside className="flex w-[518px] shrink-0 flex-col pt-px text-[12px]">
                  <div className="mr-px flex h-[272px] border border-[#a0a0a0] border-t-[#666] bg-white">
                    <ul className="flex-1 overflow-hidden">
                      <li className="flex h-[20px] items-center pl-[4px]"><HouseIcon /><span className="ml-[5px]">报表主对象</span></li>
                      {TREE.map((n) => <TreeRow key={n.text} node={n} />)}
                    </ul>
                    <ScrollBar before="" thumb="h-[170px]" />
                  </div>
                  <div className="mb-[6px] h-[3px] border-b border-[#b0b0b0] bg-[#f4f4f4]" />
                  <div className="relative">
                    <select aria-label="对象" className="block h-[20px] w-full appearance-none border border-[#adadad] bg-[#e1e1e1] pl-[3px] font-['Noto_Sans_CJK_SC',sans-serif] text-[12px] leading-[17px] [font-feature-settings:'hwid']">
                      <option>Barcode2:条形码&二维码</option>
                    </select>
                    <svg className="pointer-events-none absolute right-[4px] top-[8px]" width="9" height="6" viewBox="0 0 9 6"><path d="M.5.5l4 4 4-4" fill="none" stroke="#444" /></svg>
                  </div>
                  <div className="flex h-[30px] items-start">
                    <button type="button" aria-label="分类" className="flex h-[25px] w-[27px] items-center justify-center border border-[#99c9ef] bg-[#b8d4ea]">
                      <Svg>
                        <P c="#6a8a10" d="M1 1h6v6H1zM1 9h6v6H1z" /><P c="#b4e020" d="M2 2h4v4H2zM2 10h4v4H2z" />
                        <L c="#000" d="M3 4.500h3M4.500 3v3M3 12.500h3M4.500 11v3M9 2.500h4M9 14.500h4" />
                        <path d="M9 5.500h6M9 7.500h6M9 9.500h6M9 11.500h6" stroke="#888" strokeDasharray="2 1" />
                      </Svg>
                    </button>
                    <button type="button" aria-label="排序" className="ml-[4px] flex h-[25px] w-[20px] items-center justify-center">
                      <svg width="16" height="18" viewBox="0 0 16 18">
                        <text x="1" y="9" fontSize="9" fontWeight="bold" fill="#1414a0" fontFamily="Liberation Sans, sans-serif">A</text>
                        <text x="1" y="17" fontSize="9" fontWeight="bold" fill="#b81e2a" fontFamily="Liberation Sans, sans-serif">Z</text>
                        <path d="M11.500 3v10" stroke="#1414a0" strokeDasharray="2 1" />
                        <path d="M9 12h5l-2.500 4z" fill="#1414a0" />
                      </svg>
                    </button>
                  </div>
                  <PropertyGrid />
                  <div className="mt-[5px] h-[48px] border border-[#a0a0a0] pl-px leading-[17px]">
                    <p className="font-bold"><Song bold text="条码类型(BarcodeType)" /></p>
                    <p><Song text="指定条形码&二维码的类型" /></p>
                  </div>
                </aside>
              </div>

              <footer className="flex h-[27px] items-start bg-[#f0f0f0] pl-[21px] pt-[2px] text-[12px] shadow-[inset_0_2px_0_#f0f0f0,inset_0_3px_0_#000]">
                <button type="button" className="h-[23px] w-[68px] border-b border-r border-[#999] bg-[#e4e4e4]">普通视图</button>
                {['页面视图', '预览视图', '查询视图'].map((v) => (
                  <button key={v} type="button" className="mt-[3px] h-[18px] w-[68px] border-r border-[#999]">{v}</button>
                ))}
                <div className="ml-[20px] mt-[3px] flex h-[19px] w-[79px] items-center border-b-2 border-r border-b-[#777] border-r-[#777] bg-[#f0f0f0] pl-[5px]">
                  <svg width="15" height="15" viewBox="0 0 15 15">
                    <path d="M8 8l5 5" stroke="#b88a4a" strokeWidth="3" />
                    <circle cx="5.500" cy="5.500" r="4.500" fill="#e4f0fc" stroke="#86a4c4" />
                    <path d="M5.500 3v5M3 5.500h5" stroke="#1e6ad0" strokeWidth="2" />
                  </svg>
                  <span className="ml-[9px] w-[33px] font-['Liberation_Mono',monospace] text-[10px]">100%</span>
                  <button type="button" aria-label="缩放" className="flex h-full flex-1 items-center justify-center border-l border-white">
                    <Svg w={7} h={4}><P c="#000" d="M0 0h7v1H0zM1 1h5v1H1zM2 2h3v1H2zM3 3h1v1H3z" /></Svg>
                  </button>
                </div>
                <button type="button" className="ml-[4px] mt-[3px] h-[19px] w-[60px] border-b-2 border-r-2 border-[#888] border-l border-l-white leading-4">页面设置</button>
              </footer>
            </section>
          </div>
        </main>
      </div>

      {/* step annotations */}
      <svg className="pointer-events-none absolute left-0 top-0" width="1920" height="1080">
        <path d="M701 286 417 326 417 320 395 333 419 342 418 335z" fill="#fc3838" />
        <path d="M575 472 1384 773 1387 769 1405 787 1379 789 1382 784 574 474z" fill="#fc3838" />
      </svg>
      <div className="pointer-events-none absolute left-[804px] top-[236px] h-[31px] w-[30px] border-[3px] border-[#fc3838]" />
      <div className="pointer-events-none absolute left-[175px] top-[365px] h-[67px] w-[90px] border-[3px] border-[#fc3838]" />
      <div className="pointer-events-none absolute left-[1633px] top-[780px] h-[31px] w-[258px] border-[3px] border-[#fc3838]" />
      <Callout n={1} text="点击条形码框" badge="left-[830px] top-[255px]" tip="left-[859px] top-[241px] w-[180px]" />
      <Callout n={2} text="加入到模板内容" badge="left-[283px] top-[396px]" tip="left-[312px] top-[382px] w-[207px]" />
      <Callout n={3} text="调整条码类型为该类型" badge="left-[1603px] top-[895px]" tip="left-[1632px] top-[881px] w-[288px]" />
    </div>
  );
}
